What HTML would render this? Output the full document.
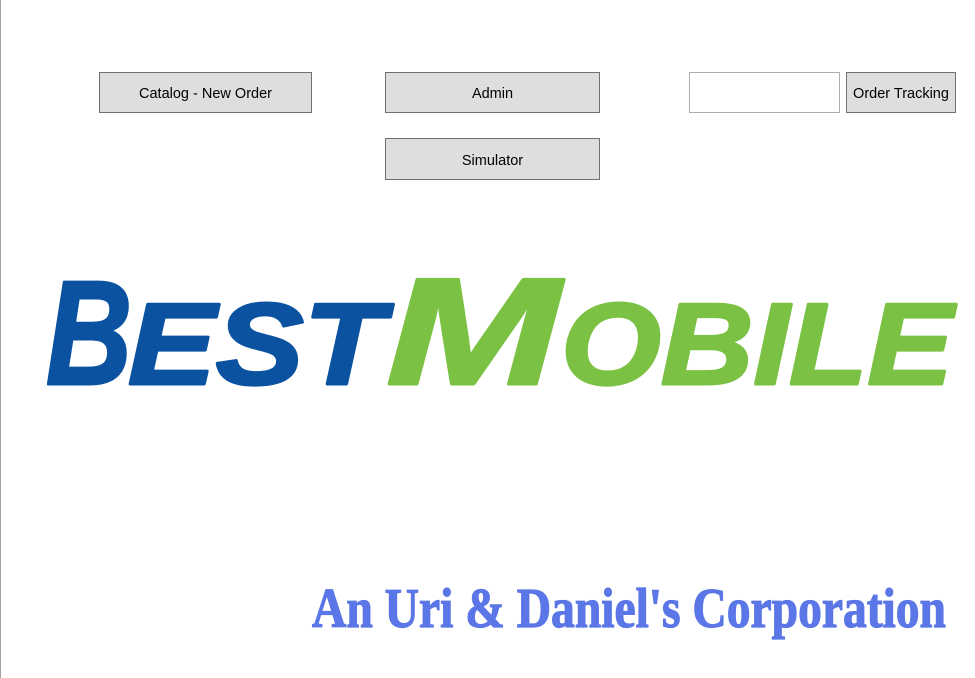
<!DOCTYPE html>
<html><head><meta charset="utf-8"><style>
body{margin:0;width:975px;height:678px;background:#fff;position:relative;overflow:hidden;font-family:"Segoe UI","Liberation Sans",sans-serif}
.lb{position:absolute;left:0;top:0;width:1px;height:678px;background:#a0a0a0}
.btn{position:absolute;background:#dedede;border:1px solid #707070;box-sizing:border-box;font-size:14.5px;color:#000;display:flex;align-items:center;justify-content:center;padding-top:3px}
.tb{position:absolute;border:1px solid #abadb3;box-sizing:border-box;background:#fff}
svg{position:absolute;left:0;top:0}
</style></head><body>
<div class="lb"></div>
<div class="btn" style="left:99px;top:72px;width:213px;height:41px">Catalog - New Order</div>
<div class="btn" style="left:385px;top:72px;width:215px;height:41px">Admin</div>
<div class="btn" style="left:385px;top:138px;width:215px;height:42px">Simulator</div>
<div class="tb" style="left:689px;top:72px;width:151px;height:41px"></div>
<div class="btn" style="left:846px;top:72px;width:110px;height:41px">Order Tracking</div>
<svg width="975" height="678">
<g font-family="Liberation Sans, sans-serif" font-weight="bold" font-style="italic" stroke-width="3" stroke-linejoin="round">
<text x="46" y="384" font-size="148" fill="#0b52a1" stroke="#0b52a1" textLength="86" lengthAdjust="spacingAndGlyphs">B</text>
<text x="128" y="384" font-size="116" fill="#0b52a1" stroke="#0b52a1" textLength="256" lengthAdjust="spacingAndGlyphs">EST</text>
<text x="386" y="384" font-size="152" fill="#7bc143" stroke="#7bc143" textLength="174" lengthAdjust="spacingAndGlyphs">M</text>
<text x="561" y="384" font-size="116" fill="#7bc143" stroke="#7bc143" textLength="392" lengthAdjust="spacingAndGlyphs">OBILE</text>
</g>
<text x="312" y="627" font-family="Liberation Serif, serif" font-weight="bold" font-size="56" fill="#5b76e6" stroke="#5b76e6" stroke-width="1.2" textLength="634" lengthAdjust="spacingAndGlyphs">An Uri &amp; Daniel's Corporation</text>
</svg>
</body></html>
